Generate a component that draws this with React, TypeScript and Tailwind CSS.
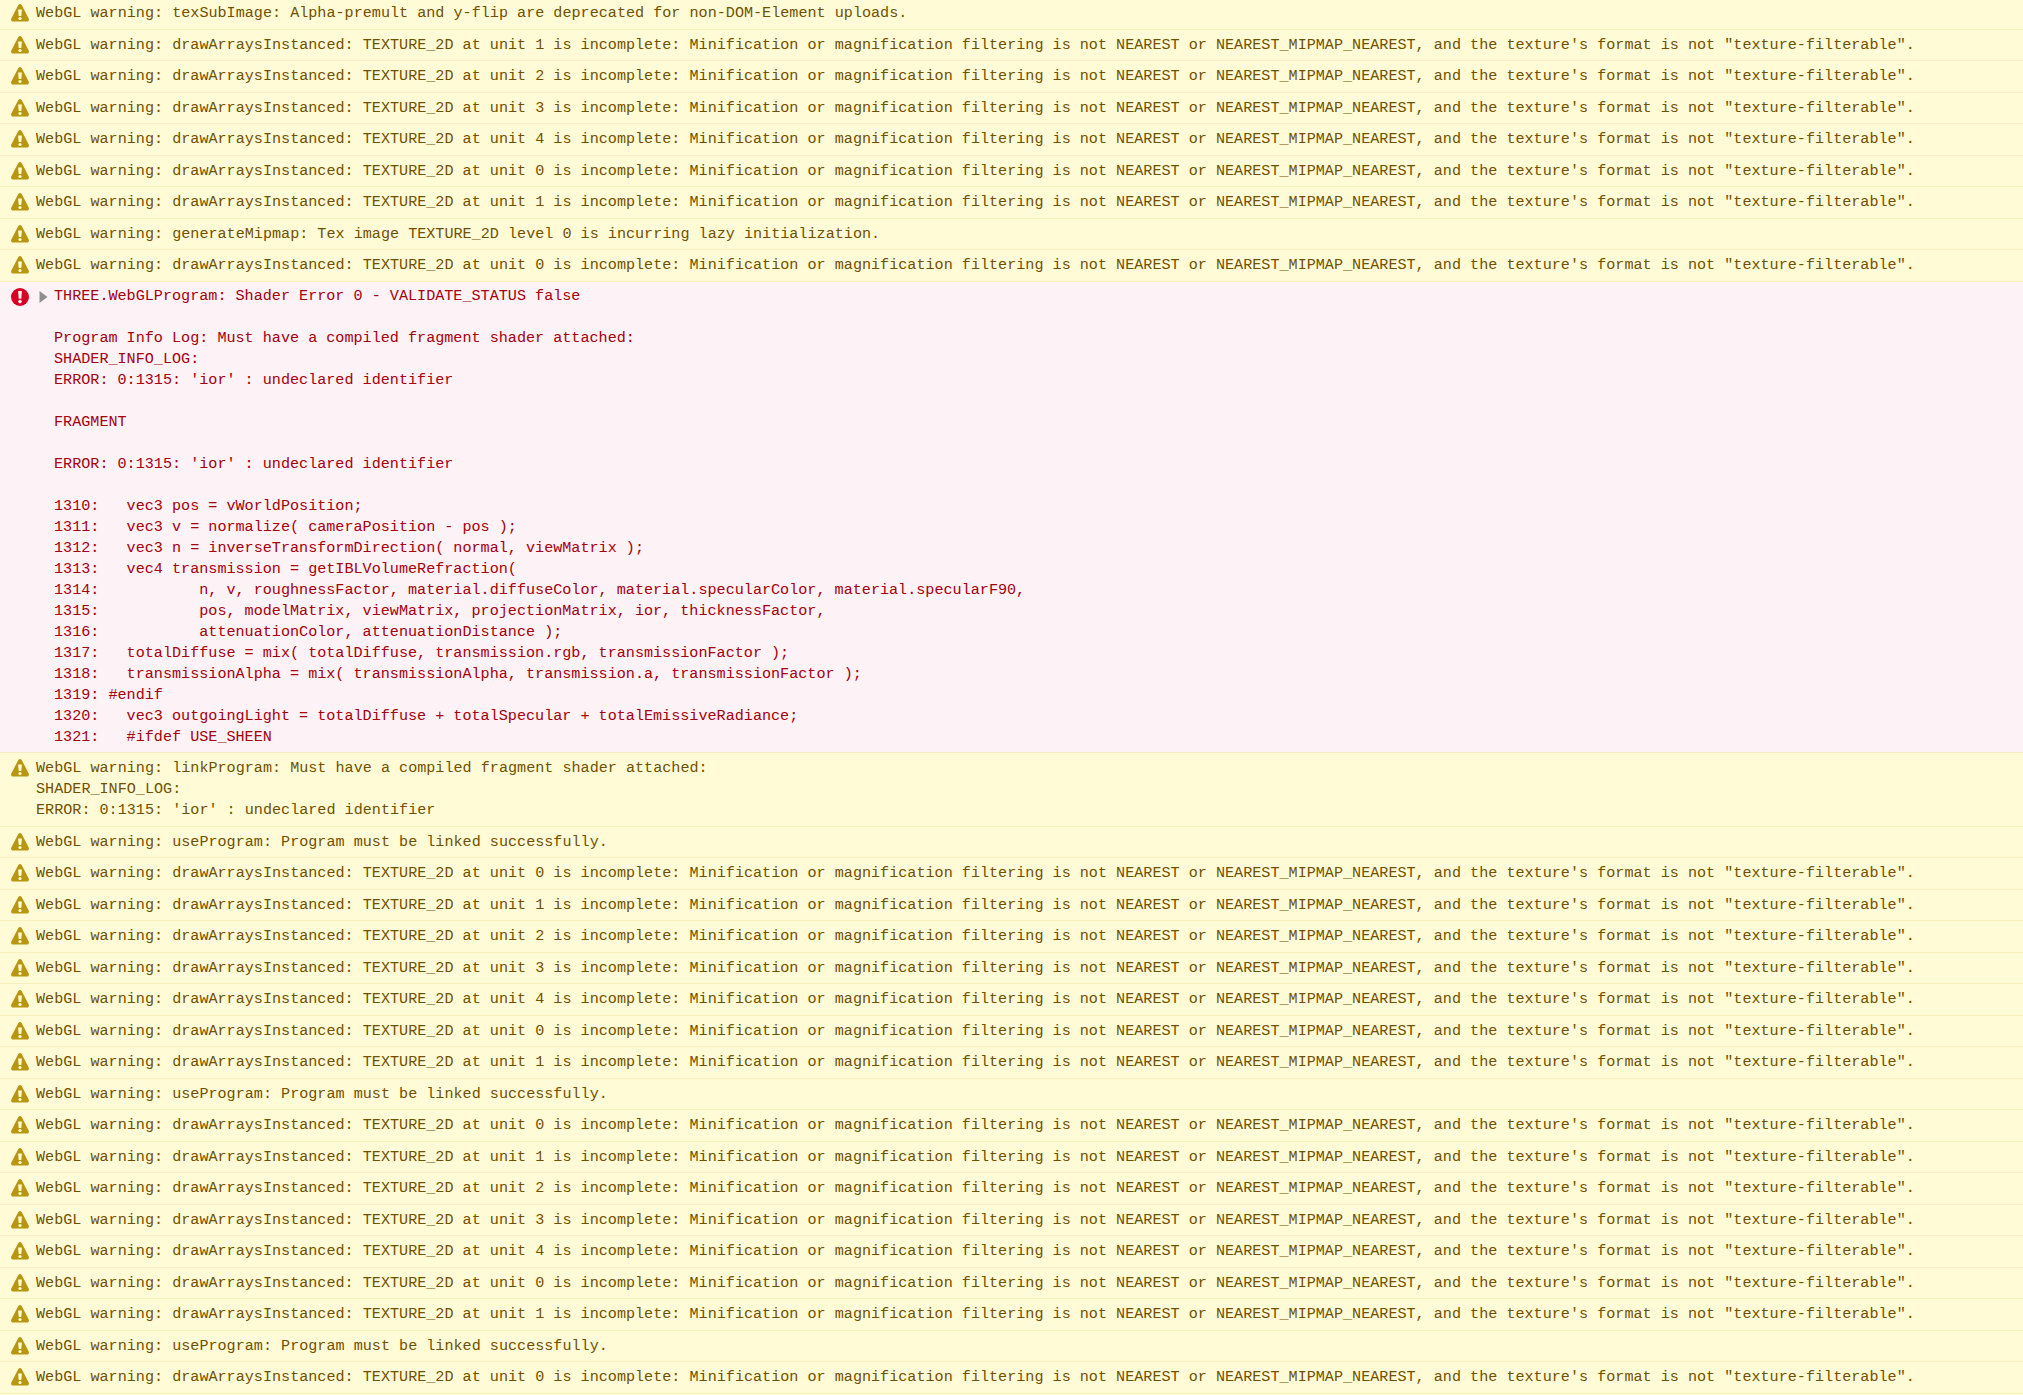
import React from 'react';

type Row = { kind: 'warn' | 'error'; text: string };

const tex = (unit: number) =>
  `WebGL warning: drawArraysInstanced: TEXTURE_2D at unit ${unit} is incomplete: Minification or magnification filtering is not NEAREST or NEAREST_MIPMAP_NEAREST, and the texture's format is not "texture-filterable".`;

const useProgram = 'WebGL warning: useProgram: Program must be linked successfully.';

const shaderError = `THREE.WebGLProgram: Shader Error 0 - VALIDATE_STATUS false

Program Info Log: Must have a compiled fragment shader attached:
SHADER_INFO_LOG:
ERROR: 0:1315: 'ior' : undeclared identifier

FRAGMENT

ERROR: 0:1315: 'ior' : undeclared identifier

1310:   vec3 pos = vWorldPosition;
1311:   vec3 v = normalize( cameraPosition - pos );
1312:   vec3 n = inverseTransformDirection( normal, viewMatrix );
1313:   vec4 transmission = getIBLVolumeRefraction(
1314:           n, v, roughnessFactor, material.diffuseColor, material.specularColor, material.specularF90,
1315:           pos, modelMatrix, viewMatrix, projectionMatrix, ior, thicknessFactor,
1316:           attenuationColor, attenuationDistance );
1317:   totalDiffuse = mix( totalDiffuse, transmission.rgb, transmissionFactor );
1318:   transmissionAlpha = mix( transmissionAlpha, transmission.a, transmissionFactor );
1319: #endif
1320:   vec3 outgoingLight = totalDiffuse + totalSpecular + totalEmissiveRadiance;
1321:   #ifdef USE_SHEEN`;

const linkWarning = `WebGL warning: linkProgram: Must have a compiled fragment shader attached:
SHADER_INFO_LOG:
ERROR: 0:1315: 'ior' : undeclared identifier`;

const texBatch = [0, 1, 2, 3, 4, 0, 1].map((u) => ({ kind: 'warn' as const, text: tex(u) }));

const rows: Row[] = [
  { kind: 'warn', text: 'WebGL warning: texSubImage: Alpha-premult and y-flip are deprecated for non-DOM-Element uploads.' },
  ...texBatch.slice(1),
  { kind: 'warn', text: 'WebGL warning: generateMipmap: Tex image TEXTURE_2D level 0 is incurring lazy initialization.' },
  { kind: 'warn', text: tex(0) },
  { kind: 'error', text: shaderError },
  { kind: 'warn', text: linkWarning },
  { kind: 'warn', text: useProgram },
  ...texBatch,
  { kind: 'warn', text: useProgram },
  ...texBatch,
  { kind: 'warn', text: useProgram },
  { kind: 'warn', text: tex(0) },
];

const WarnIcon = () => (
  <svg viewBox="0 0 18 18" className="w-[18px] h-[18px] shrink-0 mt-[1px]">
    <path
      d="M9 0c.7 0 1.300.4 1.700 1.100l7 13.300c.7 1.400-.2 3.100-1.800 3.100H2.100C.5 17.500-.4 15.800.3 14.400l7-13.300C7.700.4 8.300 0 9 0z"
      fill="#b8960f"
    />
    <path d="M7.100 5.600h3.800l-.6 6.500H7.700z" fill="#fffbd6" />
    <circle cx="9" cy="14.500" r="1.600" fill="#fffbd6" />
  </svg>
);

const ErrorIcon = () => (
  <svg viewBox="0 0 18 18" className="w-[18px] h-[18px] shrink-0 mt-[2px]">
    <circle cx="9" cy="9" r="9" fill="#d70022" />
    <path d="M7.100 3h3.800l-.6 7.800H7.700z" fill="#fdf2f5" />
    <circle cx="9" cy="13.600" r="1.800" fill="#fdf2f5" />
  </svg>
);

const Arrow = () => (
  <svg viewBox="0 0 9 12" className="w-[9px] h-[14px] shrink-0 mt-[4px] ml-[10px] mr-[6px]">
    <path d="M0.500 0L8.500 6L0.500 12Z" fill="#8f8f8f" />
  </svg>
);

const LogRow = ({ row }: { row: Row }) => {
  if (row.kind === 'error') {
    return (
      <div className="flex pl-[11px] pt-[4.500px] pb-[4px] bg-[#fdf2f5] text-[#a4000f] border-b border-[#f5ecc6]">
        <ErrorIcon />
        <Arrow />
        <pre className="font-[inherit] whitespace-pre">{row.text}</pre>
      </div>
    );
  }
  return (
    <div className="flex gap-[7px] pl-[11px] pt-[5px] pb-[4.500px] bg-[#fffbd6] text-[#715100] border-b border-[#f7efbd]">
      <WarnIcon />
      <pre className="font-[inherit] whitespace-pre">{row.text}</pre>
    </div>
  );
};

export default function App() {
  return (
    <div className="w-[2023px] h-[1395px] overflow-hidden bg-[#fffbd6] font-['Liberation_Mono',monospace] text-[15.130px] leading-[21px]">
      <div className="-mt-[2px]">
        {rows.map((row, i) => (
          <LogRow key={i} row={row} />
        ))}
      </div>
    </div>
  );
}
